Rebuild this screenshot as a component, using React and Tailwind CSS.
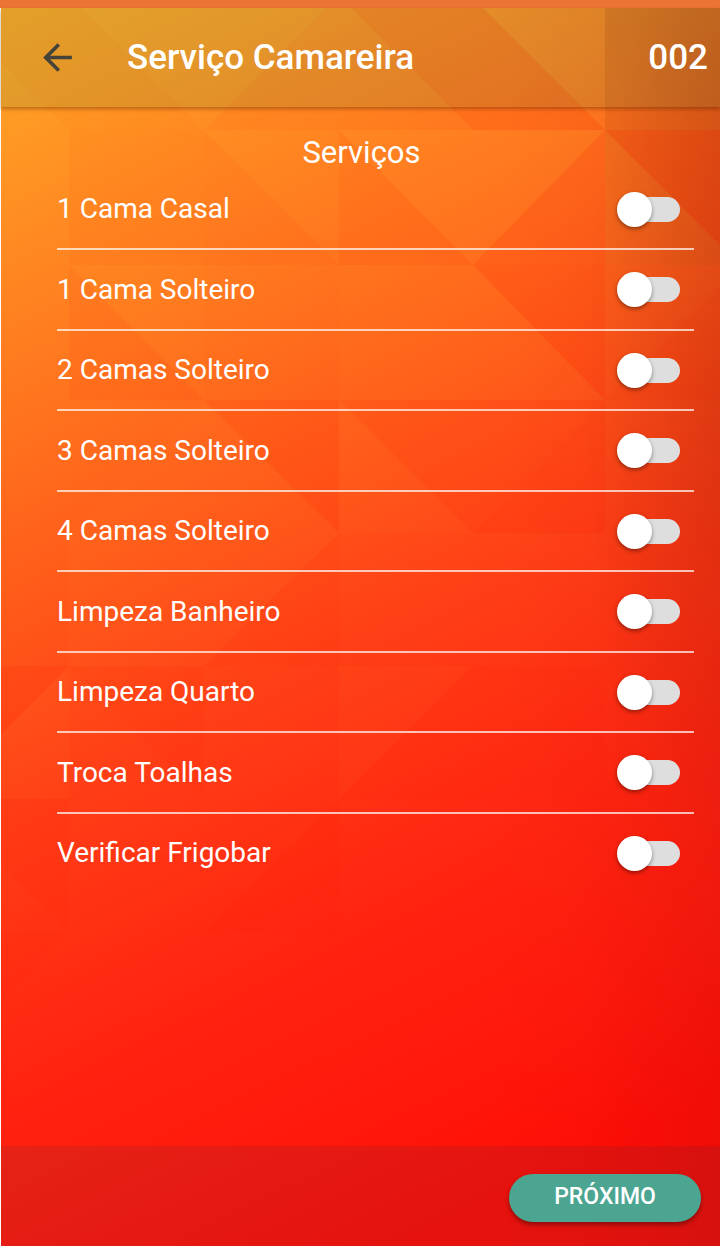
import { useState } from 'react';
import { MdArrowBack } from 'react-icons/md';

const SERVICOS = [
  '1 Cama Casal',
  '1 Cama Solteiro',
  '2 Camas Solteiro',
  '3 Camas Solteiro',
  '4 Camas Solteiro',
  'Limpeza Banheiro',
  'Limpeza Quarto',
  'Troca Toalhas',
  'Verificar Frigobar'
];

/**
 * Fundo com degradê laranja/vermelho e triângulos
 */
const Fundo = () => (
  <svg
    className="absolute inset-0 -z-10 h-full w-full"
    viewBox="1 8 719 1238"
    preserveAspectRatio="none"
    aria-hidden="true"
  >
    <defs>
      <linearGradient id="base" gradientUnits="userSpaceOnUse" x1="0" y1="0" x2="560" y2="1170">
        <stop offset="0" stopColor="#ffa826" />
        <stop offset="0.1" stopColor="#ff9824" />
        <stop offset="0.24" stopColor="#ff7e20" />
        <stop offset="0.35" stopColor="#ff691c" />
        <stop offset="0.45" stopColor="#ff5519" />
        <stop offset="0.56" stopColor="#ff4016" />
        <stop offset="0.76" stopColor="#ff2410" />
        <stop offset="0.9" stopColor="#ff180c" />
        <stop offset="1" stopColor="#ff0e06" />
      </linearGradient>
      <linearGradient id="sombra" x1="0" y1="0" x2="1" y2="0">
        <stop offset="0" stopColor="#500" stopOpacity="0" />
        <stop offset="0.4" stopColor="#500" stopOpacity="0.02" />
        <stop offset="1" stopColor="#500" stopOpacity="0.09" />
      </linearGradient>
      <linearGradient id="canto" gradientUnits="userSpaceOnUse" x1="720" y1="60" x2="560" y2="180">
        <stop offset="0" stopColor="#701000" stopOpacity="0.18" />
        <stop offset="1" stopColor="#701000" stopOpacity="0.04" />
      </linearGradient>
      <radialGradient id="lateral" gradientUnits="userSpaceOnUse" cx="0" cy="0" r="1" gradientTransform="translate(740 400) scale(160 460)">
        <stop offset="0" stopColor="#701000" stopOpacity="0.16" />
        <stop offset="1" stopColor="#701000" stopOpacity="0" />
      </radialGradient>
    </defs>
    <rect width="720" height="1246" fill="url(#base)" />
    <rect x="500" width="220" height="1246" fill="url(#sombra)" />
    <rect x="605" width="115" height="265" fill="url(#canto)" />
    <rect x="560" width="160" height="900" fill="url(#lateral)" />
    <g fill="#ff1800" fillOpacity="0.05">
      <path d="M82 8 L204 130 H69 L0 61 V8 Z" fillOpacity="0.03" />
      <path d="M326 8 L204 130 H473 L351 8 Z" fillOpacity="0.05" />
      <path d="M351 8 L473 130 H605 L483 8 Z" fillOpacity="0.14" />
      <path d="M69 130 H204 V265 H69 Z" fillOpacity="0.04" />
      <path d="M204 130 L339 265 H204 Z" />
      <path d="M339 130 L473 265 H339 Z" fillOpacity="0.07" />
      <path d="M605 130 V265 H473 Z" fillOpacity="0.1" />
      <path d="M605 130 H720 V245 Z" fillOpacity="0.14" />
      <path d="M69 265 L204 400 H69 Z" fillOpacity="0.06" />
      <path d="M473 265 H605 V400 Z" fillOpacity="0.13" />
      <path d="M605 400 L720 285 V400 Z" fillOpacity="0.05" />
      <path d="M204 400 H339 V533 Z" fillOpacity="0.09" />
      <path d="M339 400 H605 L473 533 Z" fillOpacity="0.07" />
      <path d="M473 533 L605 400 V533 Z" fillOpacity="0.12" />
      <path d="M204 666 L339 533 V666 Z" />
      <path d="M0 666 H69 L0 735 Z" fillOpacity="0.1" />
      <path d="M69 666 L204 799 V666 Z" />
      <path d="M473 666 H605 V799 H339 Z" />
      <path d="M0 799 H69 V933 L0 864 Z" fillOpacity="0.08" />
      <path d="M339 799 L204 933 H339 Z" fillOpacity="0.08" />
      <path d="M0 933 H69 L0 1002 Z" />
    </g>
    <g fill="#ffb030" fillOpacity="0.04">
      <path d="M69 265 H204 V400 Z" />
      <path d="M473 130 H605 L473 265 L339 130 Z" fillOpacity="0.06" />
      <path d="M339 265 H473 L605 400 H339 Z" />
      <path d="M605 130 L720 245 V265 H605 Z" fillOpacity="0.06" />
      <path d="M339 400 L473 533 H339 Z" fillOpacity="0.03" />
      <path d="M69 533 L204 400 L339 533 L204 666 H69 Z" fillOpacity="0.03" />
      <path d="M339 666 H473 L339 799 Z" fillOpacity="0.03" />
      <path d="M0 735 L69 666 V799 H0 Z" fillOpacity="0.04" />
    </g>
  </svg>
);

const ItemServico = ({ nome, ativo, onChange }) => (
  <li className="h-20 border-b-2 border-white/70 last:h-[78px] last:border-b-0 even:h-[81px]">
    <label className="flex h-full items-center justify-between pr-3.5 text-[28px] leading-8">
      {nome}
      <input
        type="checkbox"
        role="switch"
        checked={ativo}
        onChange={onChange}
        className="relative h-[25px] w-15 shrink-0 appearance-none rounded-full bg-[#dedede] before:absolute before:-top-[5px] before:-left-[3px] before:size-[35px] before:rounded-full before:bg-white before:shadow-[0_2px_4px_rgba(0,0,0,0.4)] before:transition-transform checked:bg-[#4ba591] checked:before:translate-x-7"
      />
    </label>
  </li>
);

const App = () => {
  const [selecionados, setSelecionados] = useState({});

  const alternar = (nome) => {
    setSelecionados((prev) => ({ ...prev, [nome]: !prev[nome] }));
  };

  return (
    <div className="flex min-h-screen flex-col bg-white font-['Roboto',sans-serif] text-white">
      <div className="h-2 bg-[#ed7533]" />

      <div className="relative isolate ml-px flex flex-1 flex-col">
        <Fundo />

        <header className="flex h-[99px] items-center bg-[#469650]/15 pr-3 pl-[35px] text-[35px] font-medium shadow-[0_2px_4px_rgba(80,30,0,0.4)]">
          <button type="button" aria-label="Voltar" className="text-[#454239]">
            <MdArrowBack className="size-[43px]" />
          </button>
          <h1 className="ml-12 flex-1 pt-0.5">Serviço Camareira</h1>
          <span className="pt-0.5">002</span>
        </header>

        <main className="flex-1 pt-7 pr-[26px] pl-14">
          <h2 className="pr-7 text-center text-[31px] leading-[35px]">Serviços</h2>
          <ul>
            {SERVICOS.map((nome) => (
              <ItemServico
                key={nome}
                nome={nome}
                ativo={!!selecionados[nome]}
                onChange={() => alternar(nome)}
              />
            ))}
          </ul>
        </main>

        <footer className="flex justify-end bg-[#28304a]/12 pt-7 pr-[19px] pb-6">
          <button
            type="button"
            className="h-12 w-48 rounded-full bg-[#4ba591] pb-0.5 text-[23px] font-medium shadow-[0_3px_4px_rgba(0,0,0,0.35)]"
          >
            PRÓXIMO
          </button>
        </footer>
      </div>
    </div>
  );
};

export default App;
